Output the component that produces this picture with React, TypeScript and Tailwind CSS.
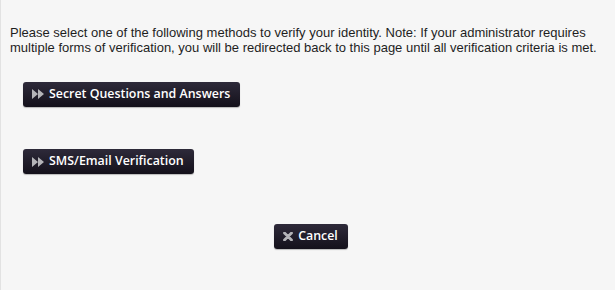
import { ReactNode } from 'react';

function ForwardIcon() {
  return (
    <svg width="12" height="10" viewBox="0 0 12 10" className="shrink-0">
      <path d="M0 0 L6 5 L0 10 Z M6 0 L12 5 L6 10 Z" fill="#b4b4b8" />
    </svg>
  );
}

function CloseIcon() {
  return (
    <svg width="10" height="9" viewBox="0 0 10 9" className="shrink-0">
      <path d="M1.5 1 L8.5 8 M8.5 1 L1.5 8" stroke="#b4b4b8" strokeWidth="2.8" strokeLinecap="round" />
    </svg>
  );
}

function DarkButton({ icon, children }: { icon: ReactNode; children: ReactNode }) {
  return (
    <button
      type="button"
      className="inline-flex h-[25px] items-center gap-[5px] rounded-[3px] bg-gradient-to-b from-[#2e2a3a] to-[#14111b] pl-[9px] pr-[10px] text-[12.4px] font-semibold text-white shadow-[0_1px_1px_rgba(0,0,0,0.25)] [font-family:'Open_Sans',sans-serif]"
    >
      {icon}
      {children}
    </button>
  );
}

export default function App() {
  return (
    <div className="h-[290px] w-[615px] border-l border-[#e2e2e2] bg-[#f6f6f6]">
      <p className="px-[9px] pt-[25px] text-[13px] leading-[15px] text-[#1e1e1e] [font-family:'Liberation_Sans',Arial,sans-serif]">
        Please select one of the following methods to verify your identity. Note: If your administrator requires
        multiple forms of verification, you will be redirected back to this page until all verification criteria is met.
      </p>

      <div className="mt-[26px] pl-[22px]">
        <DarkButton icon={<ForwardIcon />}>Secret Questions and Answers</DarkButton>
      </div>

      <div className="mt-[42px] pl-[22px]">
        <DarkButton icon={<ForwardIcon />}>SMS/Email Verification</DarkButton>
      </div>

      <div className="mt-[50px] flex justify-center pl-[6px]">
        <DarkButton icon={<CloseIcon />}>Cancel</DarkButton>
      </div>
    </div>
  );
}
